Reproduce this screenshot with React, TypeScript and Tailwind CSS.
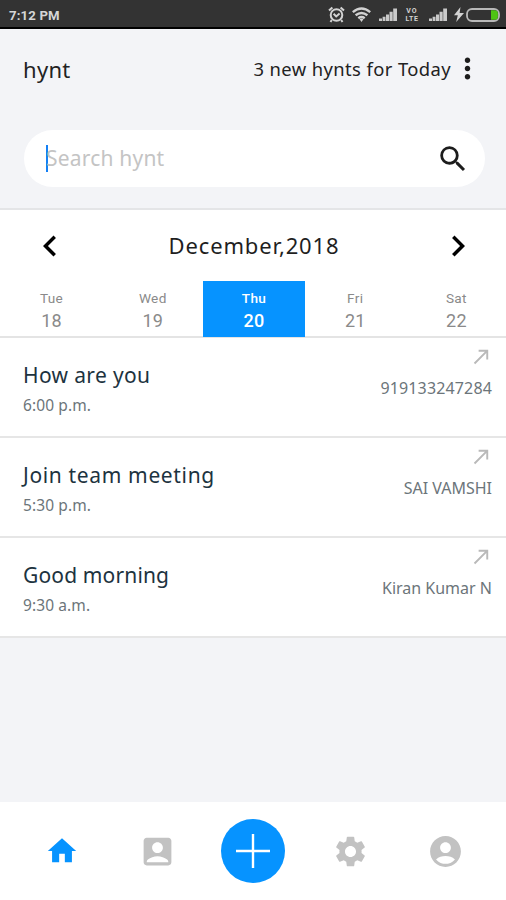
import React from 'react';
import {
  MdAccountBox,
  MdAccountCircle,
  MdCallMade,
  MdChevronLeft,
  MdChevronRight,
  MdHome,
  MdMoreVert,
  MdSearch,
  MdSettings,
} from 'react-icons/md';

const days = [
  { name: 'Tue', date: 18 },
  { name: 'Wed', date: 19 },
  { name: 'Thu', date: 20, active: true },
  { name: 'Fri', date: 21 },
  { name: 'Sat', date: 22 },
];

const hynts = [
  { title: 'How are you', time: '6:00 p.m.', from: '919133247284', titleClass: 'tracking-[0.35px]', fromClass: 'tracking-[0.15px]' },
  { title: 'Join team meeting', time: '5:30 p.m.', from: 'SAI VAMSHI', titleClass: 'tracking-[0.65px]', fromClass: '' },
  { title: 'Good morning', time: '9:30 a.m.', from: 'Kiran Kumar N', titleClass: 'tracking-[0.15px]', fromClass: '' },
];

const SignalIcon: React.FC = () => (
  <svg width="18" height="13" viewBox="0 0 18 13" fill="#c9c9c9">
    <path d="M0 13v-2.5h3V13zM3.6 13V8.8h2.9V13zM7 13V6.4h3V13zM10.5 13V3.8h3.2V13zM14.2 13V.5H18V13z" />
  </svg>
);

const StatusBar: React.FC = () => (
  <div className="flex h-[29px] items-center border-b-2 border-black bg-[#333333] pl-[9px] pr-[6px] pt-[2px]">
    <span className="pt-[2px] font-[Roboto] text-[13.2px] font-bold leading-none tracking-[0.15px] text-[#d6d6d6]">7:12 PM</span>
    <div className="ml-auto flex items-center">
      {/* Alarm */}
      <svg width="17" height="17" viewBox="0 0 17 17" fill="none" stroke="#d2d2d2" strokeWidth="2">
        <circle cx="8.5" cy="9" r="5.8" />
        <path d="M1 4.6L4.4 1.4M16 4.6L12.6 1.4M5.6 7.8l2.6 2.6 3.4-3M3.8 14l-1.3 2M13.2 14l1.3 2" />
      </svg>
      {/* Wifi */}
      <svg className="ml-[7px]" width="19" height="15" viewBox="0 0 19 15" fill="none" stroke="#d2d2d2" strokeWidth="2.4">
        <path d="M.8 5.2Q9.5-2 18.2 5.2M3.6 8.3q5.9-4.8 11.8 0M6.3 11.2q3.2-2.4 6.4 0" />
        <path d="M7.6 12.3L9.5 15l1.9-2.7q-1.9-1.4-3.8 0z" fill="#d2d2d2" stroke="none" />
      </svg>
      <div className="ml-[8px]">
        <SignalIcon />
      </div>
      <div className="ml-[7px] flex w-[16px] flex-col items-center font-[Roboto] text-[7px] font-bold leading-[8px] text-[#d2d2d2]">
        <span className="tracking-[1px]">VO</span>
        <span className="tracking-[0.5px]">LTE</span>
      </div>
      <div className="ml-[9px]">
        <SignalIcon />
      </div>
      {/* Charging */}
      <svg className="ml-[7px]" width="10" height="15" viewBox="0 0 10 15" fill="#d2d2d2">
        <path d="M6.5 0L0 8.3h3.8L2.2 15 10 6H5.6z" />
      </svg>
      <svg className="ml-[2px]" width="34" height="14" viewBox="0 0 34 14">
        <rect x="1" y="1" width="32" height="12" rx="5" fill="none" stroke="#b8b8b8" strokeWidth="1.8" />
        <path d="M25 2.2h3.5a3.4 3.4 0 0 1 3.4 3.4v2.8a3.4 3.4 0 0 1-3.4 3.4H25z" fill="#4fc414" />
      </svg>
    </div>
  </div>
);

const Header: React.FC = () => (
  <header className="flex h-[181px] flex-col border-b-2 border-[#e4e5e7] px-6">
    <div className="flex h-[80px] items-center justify-between">
      <h1 className="-ml-px text-[22px] tracking-[0.3px] text-[#222]">hynt</h1>
      <div className="flex items-center">
        <span className="text-[18.4px] tracking-[0.4px] text-[#222]">3 new hynts for Today</span>
        <MdMoreVert size={33} className="-mr-[2px] -mt-[2px]" color="#1c1c1c" />
      </div>
    </div>
    <div className="mt-[21px] flex h-[57px] w-[461px] items-center rounded-full bg-white pl-[22px] pr-[15px]">
      <span className="h-[27px] w-[2px] bg-[#1480f5]" />
      <span className="-ml-[2px] text-[21px] tracking-[0.2px] text-[#c4c4c4]">Search hynt</span>
      <MdSearch size={34} className="ml-auto" color="#1c1c1c" />
    </div>
  </header>
);

const Calendar: React.FC = () => (
  <section className="h-[128px] border-b-2 border-[#e4e4e4] bg-white">
    <div className="flex h-[71px] items-center justify-between pl-[29px] pr-[27px]">
      <MdChevronLeft size={42} color="#000" />
      <h2 className="text-[22px] tracking-[0.85px] text-[#1f1f1f]">December,2018</h2>
      <MdChevronRight size={42} color="#000" />
    </div>
    <div className="-mr-px ml-px grid grid-cols-5 font-[Roboto]">
      {days.map((day) => (
        <div
          key={day.name}
          className={`flex h-[56px] flex-col items-center pt-[8px] ${
            day.active ? 'bg-[#0693ff] text-white font-medium' : 'text-[#8a8a8a]'
          }`}
        >
          <span className="text-[13.6px] leading-[19px] tracking-[0.3px]">{day.name}</span>
          <span className="text-[18px] leading-[25px] tracking-[0.2px]">{day.date}</span>
        </div>
      ))}
    </div>
  </section>
);

const BottomNav: React.FC = () => (
  <nav className="mt-auto flex h-[98px] items-center bg-white px-[14px]">
    <div className="grid w-full grid-cols-5 place-items-center text-[#c2c2c2]">
      <MdHome size={34} color="#0693ff" />
      <MdAccountBox size={37} />
      <button className="flex h-[64px] w-[64px] items-center justify-center rounded-full bg-[#0693ff]">
        <svg width="34" height="34" viewBox="0 0 34 34" stroke="#fff" strokeWidth="2.4">
          <path d="M17 0v34M0 17h34" />
        </svg>
      </button>
      <MdSettings size={37} className="ml-[3px]" />
      <MdAccountCircle size={37} className="ml-[2px]" />
    </div>
  </nav>
);

export default function App() {
  return (
    <div className="flex h-[900px] w-[506px] flex-col overflow-hidden bg-[#f3f4f7] font-['Noto_Sans',sans-serif]">
      <StatusBar />
      <Header />
      <Calendar />
      <ul>
        {hynts.map((hynt) => (
          <li key={hynt.title} className="flex h-[100px] justify-between border-b-2 border-[#e6e6e6] bg-white pl-[23px] pr-[14px]">
            <div className="pt-[22px]">
              <p className={`text-[21px] leading-[30px] text-[#1d3340] ${hynt.titleClass}`}>{hynt.title}</p>
              <p className="text-[15.5px] leading-[30px] tracking-[0.1px] text-[#6c757a]">{hynt.time}</p>
            </div>
            <div className="flex flex-col items-end pt-[7px]">
              <MdCallMade size={23} className="-mr-px" color="#b9b9b9" />
              <p className={`mt-[5px] text-[16px] leading-[30px] text-[#6c757a] ${hynt.fromClass}`}>{hynt.from}</p>
            </div>
          </li>
        ))}
      </ul>
      <BottomNav />
    </div>
  );
}
